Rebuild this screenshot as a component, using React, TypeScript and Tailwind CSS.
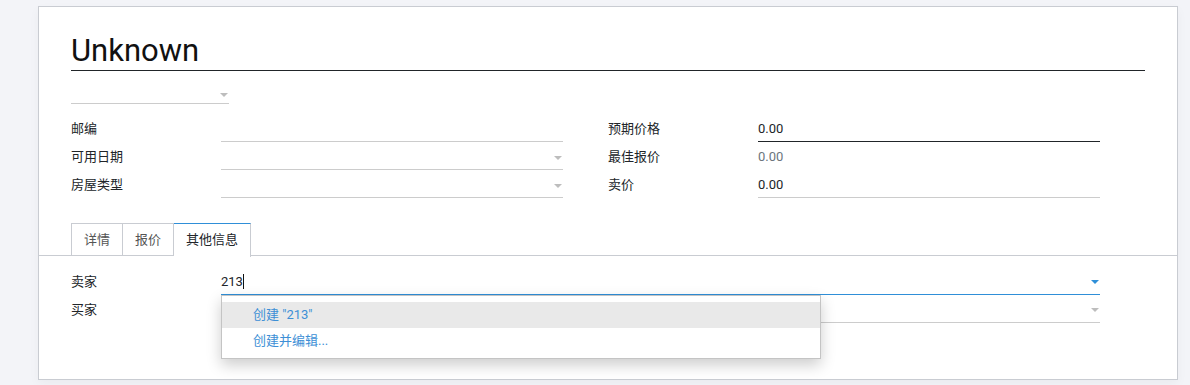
import { ReactNode } from 'react'

const font = { fontFamily: 'Roboto, "Noto Sans CJK SC", sans-serif' }

function Caret({ blue = false }: { blue?: boolean }) {
    return (
        <span
            className={`w-0 h-0 border-l-[4px] border-r-[4px] border-t-[4px] border-l-transparent border-r-transparent ${
                blue ? 'border-t-[#2f8fd8]' : 'border-t-[#bdbdbd]'
            }`}
        />
    )
}

function Row({ label, children }: { label: string; children: ReactNode }) {
    return (
        <div className="flex h-[28px] items-stretch">
            <div className="w-[150px] flex items-center pt-[1px] text-[13px] text-[#212529]">{label}</div>
            {children}
        </div>
    )
}

function Field({ value = '', caret = false, line = 'light', muted = false }: {
    value?: string
    caret?: boolean
    line?: 'light' | 'dark' | 'none'
    muted?: boolean
}) {
    const border =
        line === 'dark' ? 'border-b border-[#212529]' : line === 'light' ? 'border-b border-[#cccccc]' : 'border-b border-transparent'
    return (
        <div className={`w-[342px] flex items-center justify-between pt-[2px] ${border}`}>
            <span className={`text-[13px] ${muted ? 'text-[#6c757d]' : 'text-[#212529]'}`}>{value}</span>
            {caret && <span className="mr-[1px] mt-[2px] flex"><Caret /></span>}
        </div>
    )
}

export default function App() {
    return (
        <div className="w-[1190px] h-[385px] bg-[#f3f4f8] pt-[6px] pl-[38px]" style={font}>
            <div className="relative w-[1140px] h-[374px] bg-white border border-[#c9ccd2] shadow-[0_4px_10px_rgba(0,0,0,0.04)]">
                <div className="px-[32px]">
                    {/* title */}
                    <div className="pt-[26px] border-b border-[#212529] h-[64px]">
                        <div className="text-[31px] leading-[36px] text-[#111]">Unknown</div>
                    </div>

                    {/* small select */}
                    <div className="mt-[15px] w-[158px] h-[18px] border-b border-[#cccccc] flex justify-end items-center">
                        <span className="mr-[1px] flex"><Caret /></span>
                    </div>

                    {/* groups */}
                    <div className="mt-[10px] grid grid-cols-2">
                        <div>
                            <Row label="邮编"><Field /></Row>
                            <Row label="可用日期"><Field caret /></Row>
                            <Row label="房屋类型"><Field caret /></Row>
                        </div>
                        <div>
                            <Row label="预期价格"><Field value="0.00" line="dark" /></Row>
                            <Row label="最佳报价"><Field value="0.00" line="none" muted /></Row>
                            <Row label="卖价"><Field value="0.00" /></Row>
                        </div>
                    </div>
                </div>

                {/* tabs */}
                <div className="mt-[25px] border-b border-[#c9ccd2] pl-[32px] flex items-start h-[33px]">
                    <div className="w-[52px] h-[33px] border border-b-0 border-[#c9ccd2] flex items-center justify-center text-[13px] text-[#555]">详情</div>
                    <div className="w-[51px] h-[33px] border border-l-0 border-b-0 border-[#c9ccd2] flex items-center justify-center text-[13px] text-[#555]">报价</div>
                    <div className="w-[77px] h-[34px] border border-l-0 border-b-0 border-[#c9ccd2] border-t-[#2f8fd8] bg-white flex items-center justify-center pb-[1px] text-[13px] text-[#212529]">其他信息</div>
                </div>

                {/* tab content */}
                <div className="px-[32px] pt-[11px]">
                    <Row label="卖家">
                        <div className="relative w-[879px] flex items-center justify-between pt-[2px] border-b border-[#2f8fd8]">
                            <span className="flex items-center text-[13px] text-[#212529]">
                                213<span className="w-[1px] h-[15px] bg-[#111]" />
                            </span>
                            <span className="mr-[1px] mt-[1px] flex"><Caret blue /></span>
                            {/* autocomplete dropdown */}
                            <div className="absolute left-0 top-[28px] z-10 w-[600px] h-[64px] bg-white border border-[#c4c4c4] shadow-[0_6px_14px_rgba(0,0,0,0.2)] pt-[6px]">
                                <div className="h-[26px] bg-[#e9e9e9] pl-[31px] flex items-center text-[13px] text-[#3d8fd6]">创建 "213"</div>
                                <div className="h-[26px] pl-[31px] flex items-center text-[13px] text-[#3d8fd6]">创建并编辑...</div>
                            </div>
                        </div>
                    </Row>
                    <Row label="买家">
                        <div className="w-[879px] flex items-center justify-end pt-[2px] border-b border-[#cccccc]">
                            <span className="mr-[1px] mt-[1px] flex"><Caret /></span>
                        </div>
                    </Row>
                </div>
            </div>
        </div>
    )
}
